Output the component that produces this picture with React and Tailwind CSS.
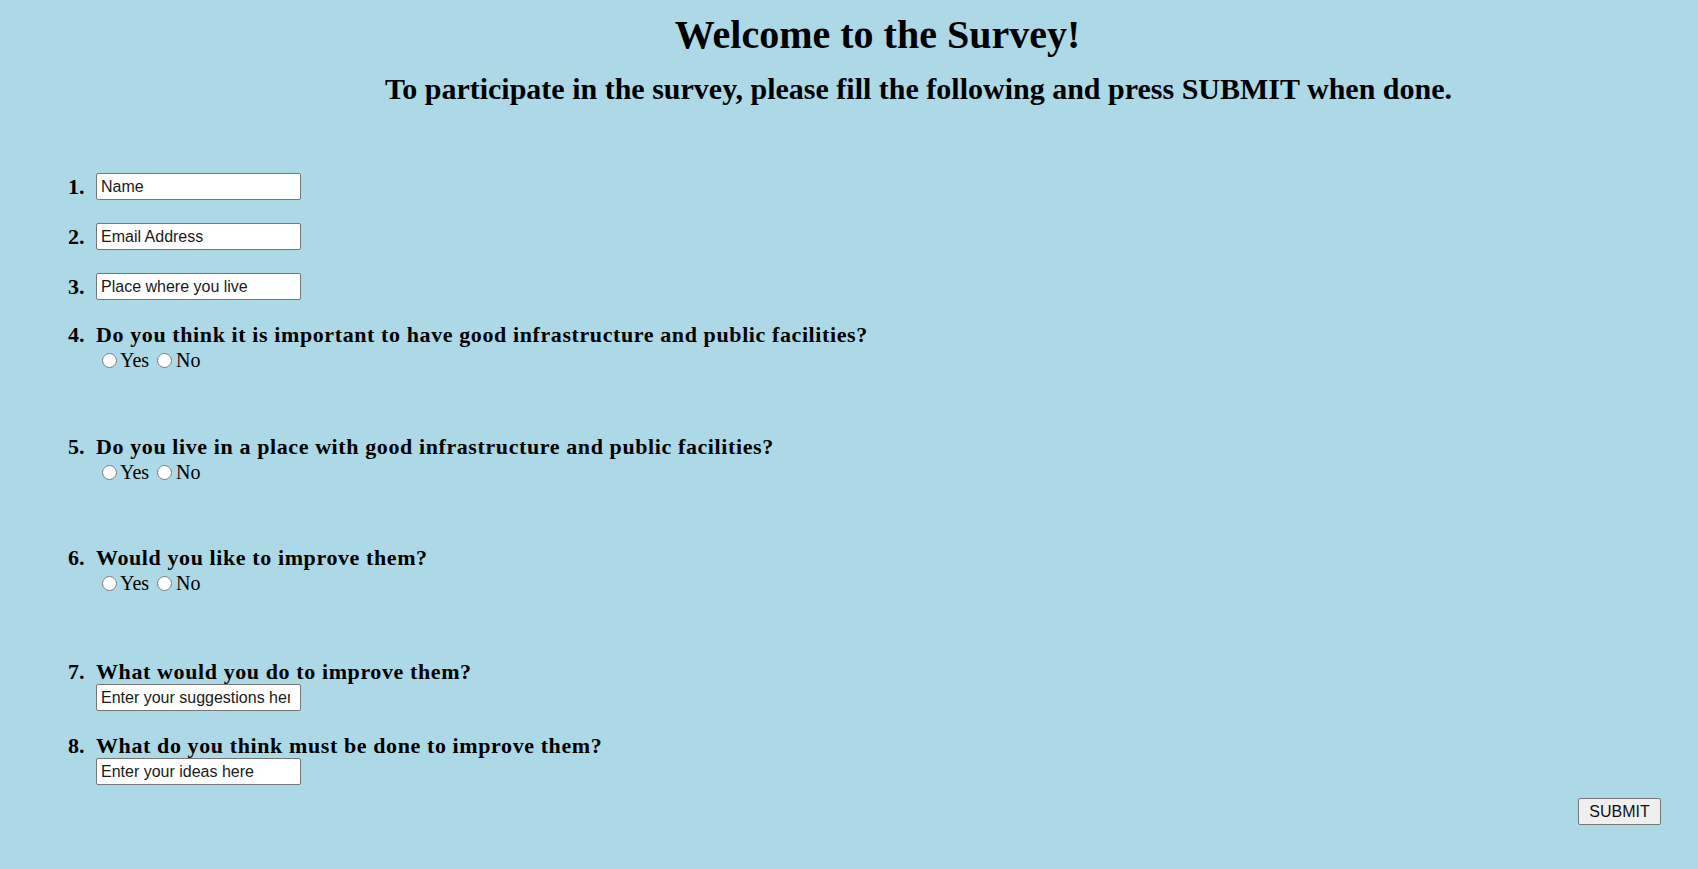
export default function App() {
  const radioQs = [
    { n: 4, text: "Do you think it is important to have good infrastructure and public facilities?", gap: "mb-[62px]" },
    { n: 5, text: "Do you live in a place with good infrastructure and public facilities?", gap: "mb-[61px]" },
    { n: 6, text: "Would you like to improve them?", gap: "mb-[64px]" },
  ];

  const inputCls =
    "h-[27px] w-[205px] rounded-[2px] border border-[#767676] bg-white pl-[4px] pr-[10px] font-['Liberation_Sans',Arial,sans-serif] text-[16px] text-[#111] placeholder:text-[#1a1a1a] outline-none";

  return (
    <div className="min-h-screen w-full bg-[#add8e6] font-['Liberation_Serif','Times_New_Roman',serif] text-black">
      <h1 className="pt-[12px] pl-[57px] text-center text-[40px] font-bold leading-[46px]">
        Welcome to the Survey!
      </h1>
      <h2 className="mt-[14px] pl-[139px] text-center text-[30px] font-bold leading-[34px]">
        To participate in the survey, please fill the following and press SUBMIT when done.
      </h2>

      <form className="mt-[67px] pl-[68px] pr-[37px]">
        {["Name", "Email Address", "Place where you live"].map((ph, i) => (
          <div key={ph} className="mb-[23px] flex items-center">
            <span className="w-[28px] text-[22px] font-bold leading-[27px]">{i + 1}.</span>
            <input type="text" placeholder={ph} className={inputCls} />
          </div>
        ))}

        {radioQs.map((q) => (
          <div key={q.n} className={"flex " + q.gap}>
            <span className="w-[28px] text-[22px] font-bold leading-[24px]">{q.n}.</span>
            <div>
              <p className="text-[22px] font-bold leading-[24px] tracking-[0.6px]">{q.text}</p>
              <div className="flex h-[26px] items-center text-[20px] leading-[22px]">
                <input type="radio" name={"q" + q.n} className="ml-[6px] mr-[3px] h-[15px] w-[15px]" />
                <span>Yes</span>
                <input type="radio" name={"q" + q.n} className="ml-[8px] mr-[4px] h-[15px] w-[15px]" />
                <span>No</span>
              </div>
            </div>
          </div>
        ))}

        {[
          { n: 7, text: "What would you do to improve them?", ph: "Enter your suggestions here", gap: "mb-[23px]" },
          { n: 8, text: "What do you think must be done to improve them?", ph: "Enter your ideas here", gap: "mb-[13px]" },
        ].map((q) => (
          <div key={q.n} className={"flex " + q.gap}>
            <span className="w-[28px] text-[22px] font-bold leading-[24px]">{q.n}.</span>
            <div>
              <p className="text-[22px] font-bold leading-[24px] tracking-[0.6px]">{q.text}</p>
              <input type="text" placeholder={q.ph} className={inputCls} />
            </div>
          </div>
        ))}

        <div className="flex justify-end">
          <button
            type="button"
            className="h-[27px] w-[83px] rounded-[2px] border border-[#767676] bg-[#efefef] font-['Liberation_Sans',Arial,sans-serif] text-[16px] text-[#111]"
          >
            SUBMIT
          </button>
        </div>
      </form>
    </div>
  );
}
